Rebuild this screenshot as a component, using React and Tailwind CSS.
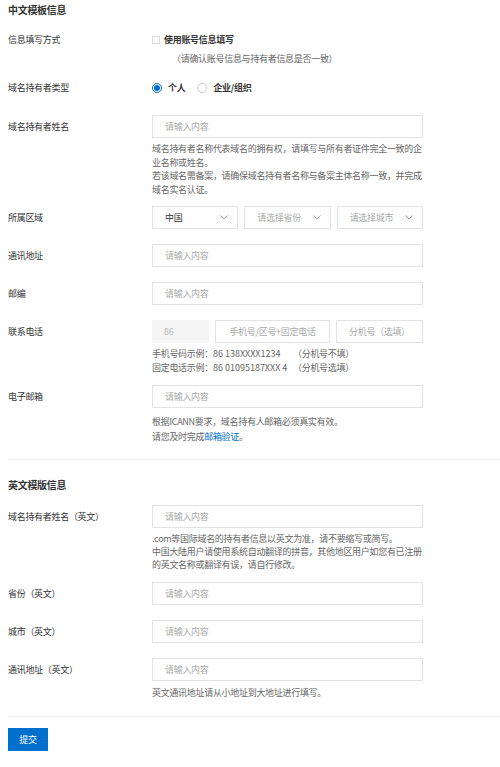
import React from 'react';

const font = { fontFamily: '"Noto Sans CJK SC", "Noto Sans", sans-serif' };

function Chevron() {
  return (
    <svg width="8" height="5" viewBox="0 0 8 5" className="shrink-0">
      <path d="M0.5 0.5 L4 4 L7.5 0.5" fill="none" stroke="#999" strokeWidth="0.9" />
    </svg>
  );
}

function Row({ label, className = '', children }) {
  return (
    <div className={`flex ${className}`}>
      <div className="w-[144px] shrink-0 h-[23px] flex items-center text-[#333]">{label}</div>
      <div className="w-[271px]">{children}</div>
    </div>
  );
}

function TextInput() {
  return (
    <div className="h-[23px] border border-[#e3e3e3] flex items-center pl-3 text-[#aaa]">请输入内容</div>
  );
}

function Select({ text, dark }) {
  return (
    <div className="h-[23px] border border-[#e3e3e3] flex items-center justify-between pl-3 pr-[9px] flex-1">
      <span className={dark ? 'text-[#333]' : 'text-[#aaa]'}>{text}</span>
      <Chevron />
    </div>
  );
}

export default function App() {
  return (
    <div className="bg-white w-[500px] min-h-[767px] pl-2 pt-[3px] text-[9px] tracking-[-0.3px]" style={font}>
      <div className="text-[10px] font-bold leading-[14px] text-[#333]">中文模板信息</div>

      <div className="flex mt-[16px] leading-[14px]">
        <div className="w-[144px] text-[#333]">信息填写方式</div>
        <div>
          <div className="flex items-center">
            <span className="w-[8px] h-[8px] border border-[#ddd] mr-1" />
            <span className="font-bold text-[#333]">使用账号信息填写</span>
          </div>
          <div className="mt-[5px] pl-[20px] text-[#666]">（请确认账号信息与持有者信息是否一致）</div>
        </div>
      </div>

      <div className="flex mt-[15px] leading-[14px]">
        <div className="w-[144px] text-[#333]">域名持有者类型</div>
        <div className="flex items-center">
          <span className="w-[10px] h-[10px] rounded-full border border-[#0070cc] flex items-center justify-center">
            <span className="w-[6px] h-[6px] rounded-full bg-[#0070cc]" />
          </span>
          <span className="ml-[6px] font-bold text-[#333]">个人</span>
          <span className="ml-[12px] w-[10px] h-[10px] rounded-full border border-[#ccc]" />
          <span className="ml-[6px] font-bold text-[#333]">企业/组织</span>
        </div>
      </div>

      <Row label="域名持有者姓名" className="mt-[20px]">
        <TextInput />
        <div className="mt-[4px] w-[274px] leading-[13.5px] text-[#666]">
          域名持有者名称代表域名的拥有权，请填写与所有者证件完全一致的企业名称或姓名。
          <br />
          若该域名需备案，请确保域名持有者名称与备案主体名称一致，并完成域名实名认证。
        </div>
      </Row>

      <Row label="所属区域" className="mt-[10px]">
        <div className="flex gap-[6px]">
          <Select text="中国" dark />
          <Select text="请选择省份" />
          <Select text="请选择城市" />
        </div>
      </Row>

      <Row label="通讯地址" className="mt-[15px]">
        <TextInput />
      </Row>

      <Row label="邮编" className="mt-[15px]">
        <TextInput />
      </Row>

      <Row label="联系电话" className="mt-[15px]">
        <div className="flex h-[23px]">
          <div className="w-[57px] bg-[#f5f5f5] flex items-center pl-3 text-[#bbb]">86</div>
          <div className="ml-[6px] w-[115px] border border-[#e3e3e3] flex items-center justify-center text-[#aaa]">手机号/区号+固定电话</div>
          <div className="ml-[6px] flex-1 border border-[#e3e3e3] flex items-center justify-center text-[#aaa]">分机号（选填）</div>
        </div>
        <div className="mt-[4px] leading-[14px] text-[#666]">
          <div className="flex">
            <span className="w-[141px]">手机号码示例：<span className="tracking-normal">86 138XXXX1234</span></span>
            <span>（分机号不填）</span>
          </div>
          <div className="flex">
            <span className="w-[141px]">固定电话示例：<span className="tracking-normal">86 01095187XXX 4</span></span>
            <span>（分机号选填）</span>
          </div>
        </div>
      </Row>

      <Row label="电子邮箱" className="mt-[10px]">
        <TextInput />
        <div className="mt-[6px] leading-[15px] text-[#666]">
          <div>根据ICANN要求，域名持有人邮箱必须真实有效。</div>
          <div>
            请您及时完成<span className="text-[#0070cc]">邮箱验证</span>。
          </div>
        </div>
      </Row>

      <div className="mt-[15px] border-t border-[#eee]" />

      <div className="mt-[18px] text-[10px] font-bold leading-[14px] text-[#333]">英文模版信息</div>

      <Row label="域名持有者姓名（英文）" className="mt-[13px]">
        <TextInput />
        <div className="mt-[4px] w-[274px] leading-[13px] text-[#666]">
          .com等国际域名的持有者信息以英文为准，请不要缩写或简写。
          <br />
          中国大陆用户请使用系统自动翻译的拼音，其他地区用户如您有已注册的英文名称或翻译有误，请自行修改。
        </div>
      </Row>

      <Row label="省份（英文）" className="mt-[11px]">
        <TextInput />
      </Row>

      <Row label="城市（英文）" className="mt-[15px]">
        <TextInput />
      </Row>

      <Row label="通讯地址（英文）" className="mt-[15px]">
        <TextInput />
        <div className="mt-[5px] leading-[14px] text-[#666]">英文通讯地址请从小地址到大地址进行填写。</div>
      </Row>

      <div className="mt-[16px] border-t border-[#eee]" />

      <button className="mt-[11px] w-[40px] h-[23px] bg-[#0070cc] text-white text-[9px]">提交</button>
    </div>
  );
}
